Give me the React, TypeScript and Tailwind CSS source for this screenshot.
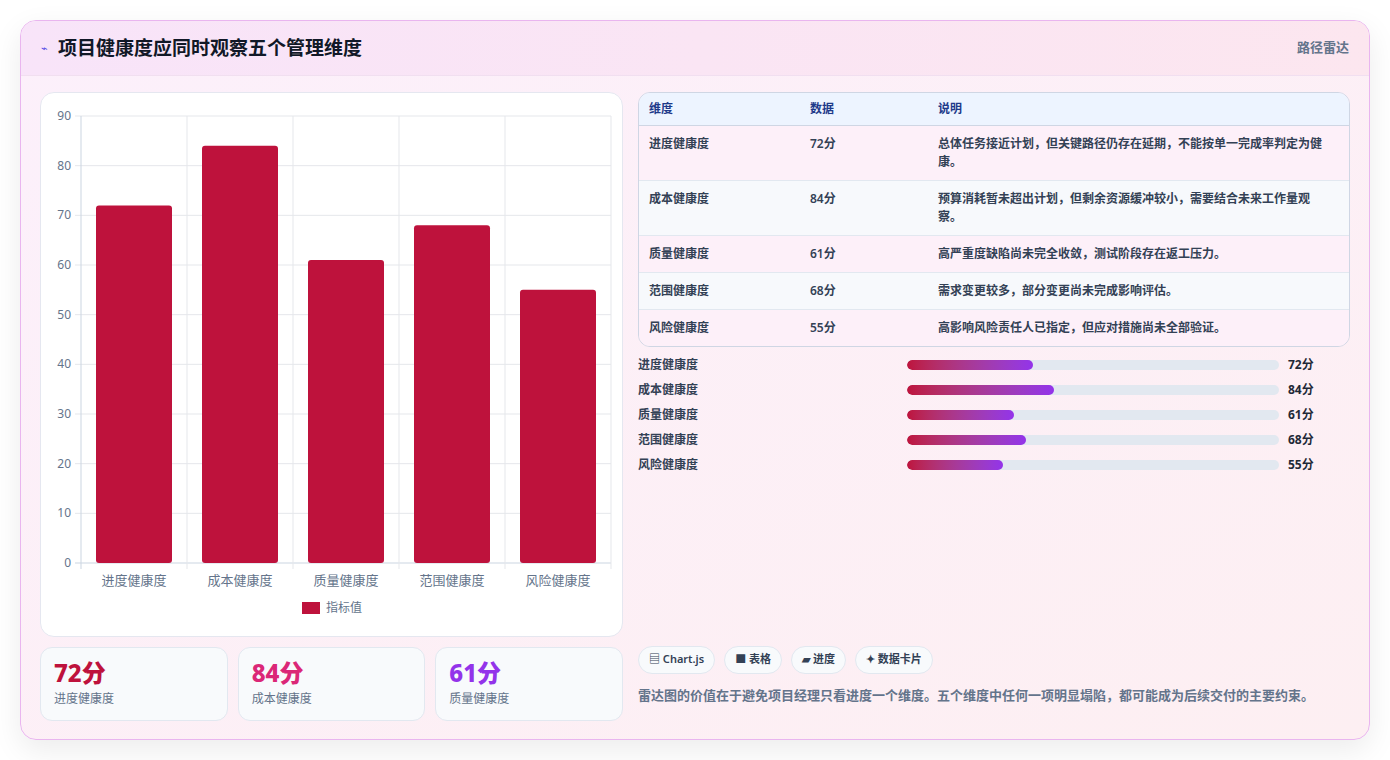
import React from "react";

const F = { fontFamily: '"Noto Sans", "Noto Sans CJK SC", sans-serif' };
const dims = [
  { n: "进度健康度", v: 72, d: "总体任务接近计划，但关键路径仍存在延期，不能按单一完成率判定为健康。" },
  { n: "成本健康度", v: 84, d: "预算消耗暂未超出计划，但剩余资源缓冲较小，需要结合未来工作量观察。" },
  { n: "质量健康度", v: 61, d: "高严重度缺陷尚未完全收敛，测试阶段存在返工压力。" },
  { n: "范围健康度", v: 68, d: "需求变更较多，部分变更尚未完成影响评估。" },
  { n: "风险健康度", v: 55, d: "高影响风险责任人已指定，但应对措施尚未全部验证。" },
];

function Chart() {
  const x0 = 40, w = 530, y0 = 470, h = 447;
  const cw = w / 5;
  return (
    <svg width="582" height="544" className="block">
      {[0, 10, 20, 30, 40, 50, 60, 70, 80, 90].map((t) => {
        const y = y0 - (t / 90) * h;
        return (
          <g key={t}>
            <line x1={x0 - 6} x2={x0 + w} y1={y} y2={y} stroke={t === 0 ? "#cbd5e1" : "#e5e7eb"} />
            <text x={x0 - 10} y={y + 4} textAnchor="end" fontSize="12" fill="#64748b">{t}</text>
          </g>
        );
      })}
      {[0, 1, 2, 3, 4, 5].map((i) => (
        <line key={i} x1={x0 + i * cw} x2={x0 + i * cw} y1={y0 - h} y2={y0 + 6} stroke={i === 0 ? "#cbd5e1" : "#e5e7eb"} />
      ))}
      {dims.map((d, i) => {
        const bh = (d.v / 90) * h;
        return (
          <g key={i}>
            <rect x={x0 + i * cw + 15} y={y0 - bh} width={cw - 30} height={bh} rx="3" fill="#be123c" />
            <text x={x0 + i * cw + cw / 2} y={y0 + 22} textAnchor="middle" fontSize="13" fill="#64748b">{d.n}</text>
          </g>
        );
      })}
      <rect x="261" y="509" width="18" height="12" fill="#be123c" />
      <text x="285" y="519" fontSize="12" fill="#64748b">指标值</text>
    </svg>
  );
}

export default function App() {
  const colors = ["text-[#be123c]", "text-[#db2777]", "text-[#9333ea]"];
  return (
    <div style={F} className="w-[1390px] h-[760px] bg-white pt-[20px] px-[20px]">
      <div className="h-[720px] rounded-[16px] border border-[#e9b5ef] overflow-hidden bg-gradient-to-br from-[#fcf0fb] to-[#fdeff2] shadow-[0_10px_30px_rgba(0,0,0,0.08)]">
        <div className="h-[55px] flex items-center justify-between px-[20px] bg-gradient-to-r from-[#f8e4f9] to-[#fce6ef] border-b border-[#f1dff0]">
          <div className="flex items-center gap-[10px]">
            <span className="text-[#4f46e5] text-[11px]">⌁</span>
            <span className="text-[19px] font-bold text-[#111827]">项目健康度应同时观察五个管理维度</span>
          </div>
          <span className="text-[13px] text-[#64748b] font-semibold">路径雷达</span>
        </div>
        <div className="flex gap-[15px] px-[19px] pt-[16px]">
          <div className="w-[583px] flex flex-col gap-[10px]">
            <div className="h-[545px] rounded-[14px] border border-[#e5e7f0] bg-white overflow-hidden">
              <Chart />
            </div>
            <div className="flex gap-[10px]">
              {dims.slice(0, 3).map((d, i) => (
                <div key={i} className="flex-1 h-[74px] rounded-[12px] border border-[#e2e8f0] bg-[#f8fafc] px-[13px] pt-[10px]">
                  <div className={`text-[24px] font-extrabold leading-[30px] ${colors[i]}`}>{d.v}分</div>
                  <div className="text-[12px] text-[#64748b] mt-[2px]">{d.n}</div>
                </div>
              ))}
            </div>
          </div>
          <div className="flex-1 flex flex-col">
            <div className="rounded-[12px] border border-[#cfd6e4] overflow-hidden text-[12px] font-semibold text-[#334155]">
              <div className="flex h-[33px] items-center bg-[#edf4ff] text-[#1e3a8a] border-b border-[#cfd6e4]">
                <div className="w-[171px] pl-[10px]">维度</div>
                <div className="w-[128px]">数据</div>
                <div className="flex-1">说明</div>
              </div>
              {dims.map((d, i) => (
                <div key={i} className={`flex py-[9px] leading-[18px] ${i ? "border-t border-[#e2e8f0]" : ""} ${i % 2 ? "bg-[#f7f9fc]" : "bg-[#fdf0f9]"}`}>
                  <div className="w-[171px] pl-[10px]">{d.n}</div>
                  <div className="w-[128px]">{d.v}分</div>
                  <div className="flex-1 pr-[20px]">{d.d}</div>
                </div>
              ))}
            </div>
            <div className="mt-[9px] flex flex-col gap-[7px]">
              {dims.map((d, i) => (
                <div key={i} className="flex items-center h-[18px] text-[12px] font-semibold">
                  <div className="w-[269px] text-[#334155]">{d.n}</div>
                  <div className="w-[372px] h-[10px] rounded-full bg-[#e2e8f0] overflow-hidden">
                    <div className="h-full rounded-full bg-gradient-to-r from-[#be123c] to-[#9333ea]" style={{ width: `${d.v * 1.75}px` }} />
                  </div>
                  <div className="ml-[9px] text-[#1f2937] font-bold">{d.v}分</div>
                </div>
              ))}
            </div>
            <div className="mt-auto flex gap-[9px] text-[11px] font-semibold text-[#334155]">
              {["▤ Chart.js", "■ 表格", "▰ 进度", "✦ 数据卡片"].map((c) => (
                <div key={c} className="h-[28px] px-[10px] flex items-center rounded-full border border-[#e2e8f0] bg-[#f8fafc]">{c}</div>
              ))}
            </div>
            <div className="mt-[12px] mb-[16px] text-[13px] font-semibold text-[#64748b]">雷达图的价值在于避免项目经理只看进度一个维度。五个维度中任何一项明显塌陷，都可能成为后续交付的主要约束。</div>
          </div>
        </div>
      </div>
    </div>
  );
}
